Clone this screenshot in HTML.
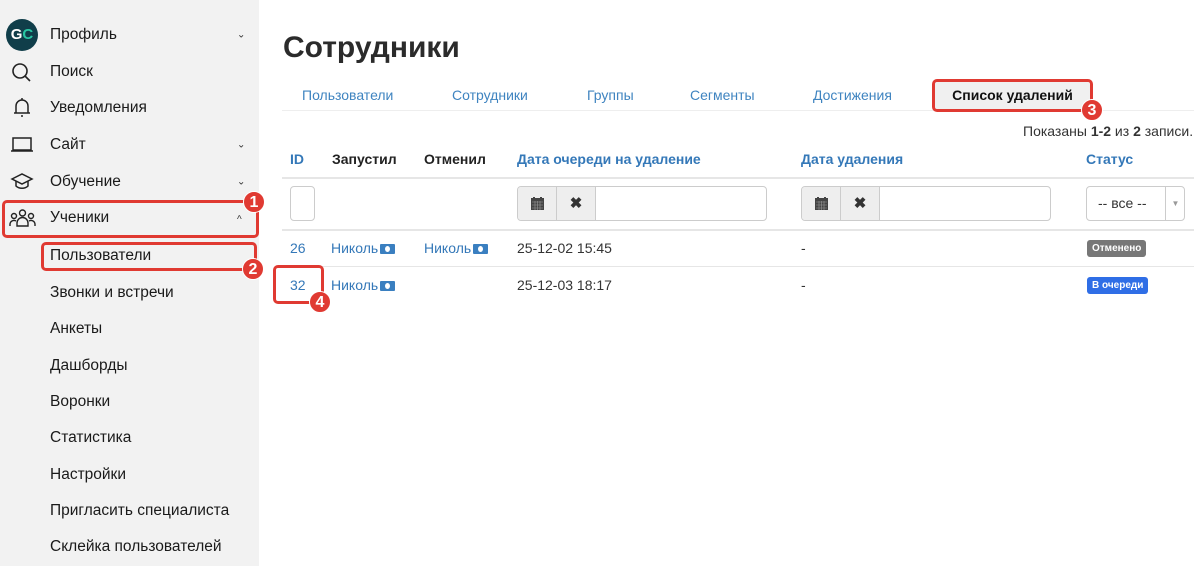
<!DOCTYPE html>
<html><head><meta charset="utf-8"><style>
*{box-sizing:border-box;margin:0;padding:0}
body{width:1200px;height:566px;overflow:hidden;background:#fff;font-family:"Liberation Sans","Noto Sans CJK SC",sans-serif;position:relative;color:#222}
.a{position:absolute;white-space:nowrap}
#sb{position:absolute;left:0;top:0;width:259px;height:566px;background:#f2f2f2}
.si{position:absolute;left:50px;font-size:15.5px;color:#1a1a1a;transform:translateY(-50%)}
.chev{position:absolute;left:237px;font-size:10px;color:#333;transform:translateY(-50%)}
.red{position:absolute;border:3px solid #e03a32;border-radius:5px}
.bd{position:absolute;width:22px;height:22px;border-radius:50%;background:#e03a32;color:#fff;font-size:16px;font-weight:bold;text-align:center;line-height:22px;border:1px solid #fff}
.tab{position:absolute;top:87px;font-size:14px;color:#3f84c0}
.th{position:absolute;top:151px;font-size:14px;font-weight:bold}
.lnk{color:#3478b8}
.hl{position:absolute;left:282px;width:912px;height:2px;background:#e6e6e6}
.cash{display:inline-block;width:15px;height:10px;background:#3a7fc0;border-radius:1px;vertical-align:-1px;position:relative;margin-left:2px}
.cash:after{content:"";position:absolute;left:5px;top:2px;width:5px;height:6px;border-radius:50%;background:#fff}
.dg{position:absolute;top:186px;height:35px;border:1px solid #ccc;border-radius:4px;background:#fff;overflow:hidden}
.ab{position:absolute;top:0;height:33px;width:39px;background:#eee;border-right:1px solid #ccc;text-align:center;line-height:33px;font-size:15px;color:#333}
.ab svg{position:absolute;left:13px;top:10px}
.lbl{position:absolute;font-size:10px;font-weight:bold;color:#fff;border-radius:3px;padding:0 5px;height:17px;line-height:17px}
</style></head><body>
<div id="sb">
<div class="a" style="left:6px;top:19px;width:32px;height:32px;border-radius:50%;background:#103e4a;color:#fff;font-weight:bold;font-size:15px;text-align:center;line-height:32px">G<span style="color:#29c7a4">C</span></div>
<div class="si" style="top:35px">Профиль</div><div class="chev" style="top:35px">⌄</div>
<svg class="a" style="left:11px;top:62px" width="22" height="22" viewBox="0 0 22 22" fill="none" stroke="#222" stroke-width="1.6"><circle cx="9" cy="9" r="7"/><path d="M14 14l5 5"/></svg>
<div class="si" style="top:72px">Поиск</div>
<svg class="a" style="left:12px;top:97px" width="20" height="22" viewBox="0 0 20 22" fill="none" stroke="#222" stroke-width="1.5"><path d="M4 16V9a6 6 0 0112 0v7H4zM2 16h16M10 18v2M10 1v2"/></svg>
<div class="si" style="top:108px">Уведомления</div>
<svg class="a" style="left:10px;top:136px" width="24" height="18" viewBox="0 0 24 18" fill="none" stroke="#222" stroke-width="1.5"><rect x="3" y="2" width="18" height="12"/><path d="M1 15h22"/></svg>
<div class="si" style="top:145px">Сайт</div><div class="chev" style="top:145px">⌄</div>
<svg class="a" style="left:10px;top:172px" width="24" height="20" viewBox="0 0 24 20" fill="none" stroke="#222" stroke-width="1.5"><path d="M2 7l10-5 10 5-10 5z"/><path d="M6 9v5c3 3 9 3 12 0V9"/></svg>
<div class="si" style="top:182px">Обучение</div><div class="chev" style="top:182px">⌄</div>
<svg class="a" style="left:9px;top:208px" width="27" height="20" viewBox="0 0 27 20" fill="none" stroke="#222" stroke-width="1.4"><circle cx="13.5" cy="5" r="3"/><circle cx="5" cy="8" r="2.5"/><circle cx="22" cy="8" r="2.5"/><path d="M8 18v-3a5.5 5.5 0 0111 0v3zM1 18v-2a4 4 0 016-3M26 18v-2a4 4 0 00-6-3"/></svg>
<div class="si" style="top:218px">Ученики</div><div class="chev" style="top:220px">^</div>
<div class="si" style="top:256px">Пользователи</div>
<div class="si" style="top:293px">Звонки и встречи</div>
<div class="si" style="top:329px">Анкеты</div>
<div class="si" style="top:366px">Дашборды</div>
<div class="si" style="top:402px">Воронки</div>
<div class="si" style="top:438px">Статистика</div>
<div class="si" style="top:475px">Настройки</div>
<div class="si" style="top:511px">Пригласить специалиста</div>
<div class="si" style="top:547px">Склейка пользователей</div>
</div>
<div class="red" style="left:2px;top:200px;width:257px;height:38px"></div>
<div class="bd" style="left:243px;top:191px">1</div>
<div class="red" style="left:41px;top:242px;width:216px;height:29px"></div>
<div class="bd" style="left:242px;top:258px">2</div>

<div class="a" style="left:283px;top:31px;font-size:30px;font-weight:bold;color:#2b2b2b">Сотрудники</div>
<div class="tab" style="left:302px">Пользователи</div>
<div class="tab" style="left:452px">Сотрудники</div>
<div class="tab" style="left:587px">Группы</div>
<div class="tab" style="left:690px">Сегменты</div>
<div class="tab" style="left:813px">Достижения</div>
<div class="a" style="left:282px;top:110px;width:912px;height:1px;background:#eee"></div>
<div class="a" style="left:932px;top:79px;width:161px;height:33px;background:#f0f0f0;border:3px solid #e03a32;border-radius:5px;font-size:14px;font-weight:bold;text-align:center;line-height:27px;color:#111">Список удалений</div>
<div class="bd" style="left:1081px;top:99px">3</div>
<div class="a" style="left:1023px;top:123px;font-size:14px;color:#333">Показаны <b>1-2</b> из <b>2</b> записи.</div>

<div class="th lnk" style="left:290px">ID</div>
<div class="th" style="left:332px">Запустил</div>
<div class="th" style="left:424px">Отменил</div>
<div class="th lnk" style="left:517px">Дата очереди на удаление</div>
<div class="th lnk" style="left:801px">Дата удаления</div>
<div class="th lnk" style="left:1086px">Статус</div>
<div class="hl" style="top:177px"></div>
<div class="a" style="left:290px;top:186px;width:25px;height:35px;border:1px solid #ccc;border-radius:4px"></div>
<div class="dg" style="left:517px;width:250px"><div class="ab" style="left:0"><svg width="13" height="13" viewBox="0 0 13 13"><rect x="0" y="1" width="13" height="12" fill="#444"/><rect x="2" y="0" width="2" height="3" fill="#444"/><rect x="9" y="0" width="2" height="3" fill="#444"/><path d="M1 5h11M1 8h11M1 11h11M4 4v9M6.5 4v9M9 4v9" stroke="#999" stroke-width="0.6"/></svg></div><div class="ab" style="left:39px;font-weight:bold">✖</div></div>
<div class="dg" style="left:801px;width:250px"><div class="ab" style="left:0"><svg width="13" height="13" viewBox="0 0 13 13"><rect x="0" y="1" width="13" height="12" fill="#444"/><rect x="2" y="0" width="2" height="3" fill="#444"/><rect x="9" y="0" width="2" height="3" fill="#444"/><path d="M1 5h11M1 8h11M1 11h11M4 4v9M6.5 4v9M9 4v9" stroke="#999" stroke-width="0.6"/></svg></div><div class="ab" style="left:39px;font-weight:bold">✖</div></div>
<div class="a" style="left:1086px;top:186px;width:99px;height:35px;border:1px solid #ccc;border-radius:4px;font-size:14px;color:#333;line-height:33px;padding-left:11px">-- все --<span style="position:absolute;left:78px;top:0;height:33px;border-left:1px solid #ccc;width:20px;font-size:8px;color:#999;text-align:center">▼</span></div>
<div class="hl" style="top:229px"></div>
<div class="a" style="top:240px;left:290px;font-size:14px;color:#3478b8">26</div>
<div class="a" style="top:240px;left:331px;font-size:14px;color:#3478b8">Николь<span class="cash"></span></div>
<div class="a" style="top:240px;left:424px;font-size:14px;color:#3478b8">Николь<span class="cash"></span></div>
<div class="a" style="top:240px;left:517px;font-size:14px;color:#333">25-12-02 15:45</div>
<div class="a" style="top:240px;left:801px;font-size:14px;color:#333">-</div>
<div class="lbl" style="left:1087px;top:240px;background:#777">Отменено</div>
<div class="hl" style="top:266px;height:1px"></div>
<div class="a" style="top:277px;left:290px;font-size:14px;color:#3478b8">32</div>
<div class="a" style="top:277px;left:331px;font-size:14px;color:#3478b8">Николь<span class="cash"></span></div>
<div class="a" style="top:277px;left:517px;font-size:14px;color:#333">25-12-03 18:17</div>
<div class="a" style="top:277px;left:801px;font-size:14px;color:#333">-</div>
<div class="lbl" style="left:1087px;top:277px;background:#2f6ee6">В очереди</div>
<div class="red" style="left:273px;top:265px;width:51px;height:39px"></div>
<div class="bd" style="left:309px;top:291px">4</div>
</body></html>
